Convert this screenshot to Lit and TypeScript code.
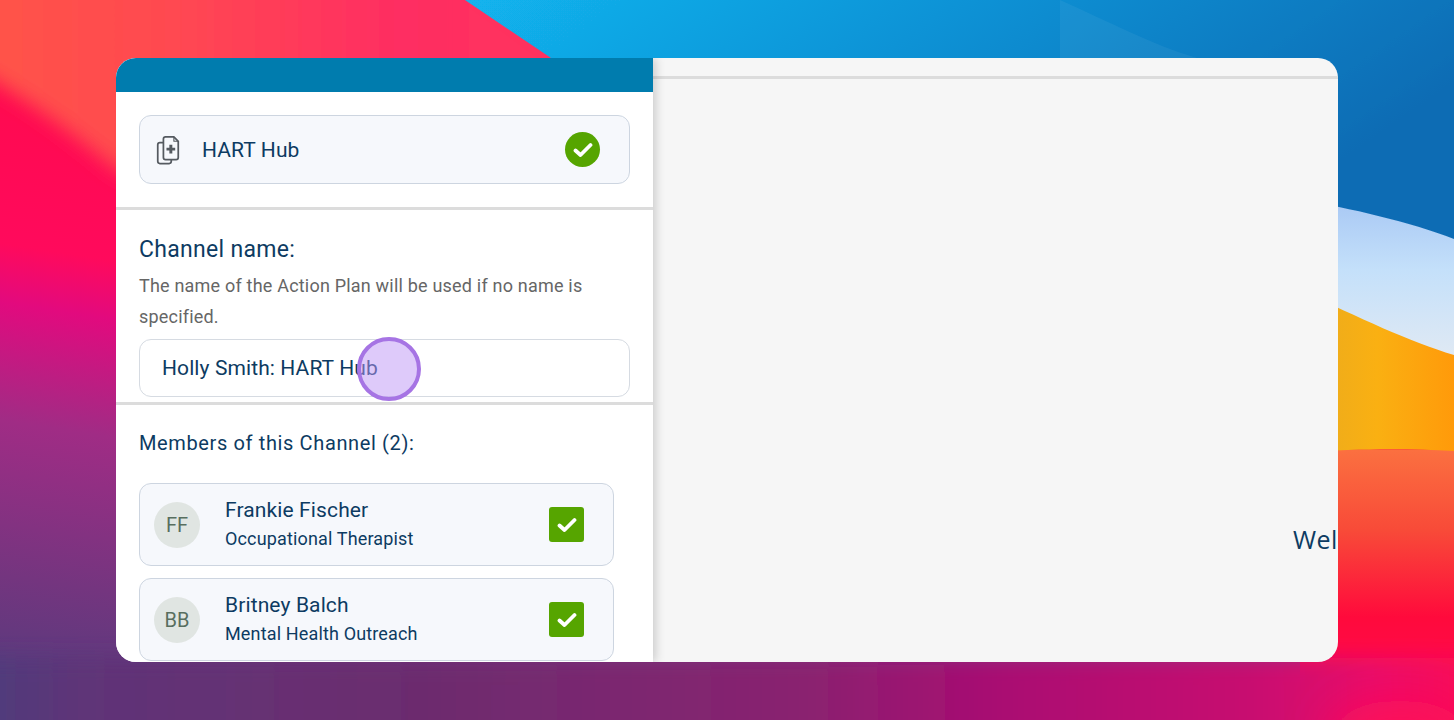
import { LitElement, html, css, svg } from "lit";
import { customElement } from "lit/decorators.js";

const wallpaper = svg`
<svg class="wall" viewBox="0 0 1454 720" width="1454" height="720" preserveAspectRatio="none">
  <defs>
    <linearGradient id="base" gradientUnits="userSpaceOnUse" x1="0" y1="0" x2="-110" y2="720">
      <stop offset="0" stop-color="#ff0a48"/><stop offset=".33" stop-color="#ff0a5c"/>
      <stop offset=".41" stop-color="#e20a7e"/><stop offset=".57" stop-color="#a02c85"/>
      <stop offset=".78" stop-color="#74357f"/><stop offset="1" stop-color="#483e7c"/>
    </linearGradient>
    <linearGradient id="bottom" x1="0" y1="0" x2="1" y2="0">
      <stop offset="0" stop-color="#4a3e7c"/><stop offset=".08" stop-color="#5f3478"/>
      <stop offset=".3" stop-color="#6c2c6e"/><stop offset=".55" stop-color="#8a2270"/>
      <stop offset=".68" stop-color="#aa0a72"/><stop offset=".84" stop-color="#c80a70"/>
      <stop offset=".92" stop-color="#e8086a"/><stop offset="1" stop-color="#ff0a50"/>
    </linearGradient>
    <linearGradient id="coral" x1="0" y1="0" x2="1" y2="0">
      <stop offset="0" stop-color="#ff5548"/><stop offset=".25" stop-color="#ff4a50"/>
      <stop offset=".55" stop-color="#fe2d62"/><stop offset="1" stop-color="#ff3a58"/>
    </linearGradient>
    <linearGradient id="sky" x1="0" y1="0" x2="1" y2=".35">
      <stop offset="0" stop-color="#12b4ee"/><stop offset=".45" stop-color="#0f93d6"/>
      <stop offset="1" stop-color="#0f6cb4"/>
    </linearGradient>
    <linearGradient id="pale" x1="0" y1="0" x2="0" y2="1">
      <stop offset="0" stop-color="#a8c8f4"/><stop offset=".45" stop-color="#c4e0fa"/>
      <stop offset="1" stop-color="#dfe9f4"/>
    </linearGradient>
    <linearGradient id="amber" x1="0" y1="0" x2="1" y2="0">
      <stop offset="0" stop-color="#e8aa20"/><stop offset=".5" stop-color="#fab012"/>
      <stop offset="1" stop-color="#ff9a0a"/>
    </linearGradient>
    <linearGradient id="red" x1="0" y1="0" x2="0" y2="1">
      <stop offset="0" stop-color="#fb7040"/><stop offset=".3" stop-color="#f84a38"/>
      <stop offset=".62" stop-color="#ff0a3c"/><stop offset="1" stop-color="#ff0a58"/>
    </linearGradient>
    <filter id="b2" filterUnits="userSpaceOnUse" x="-200" y="-200" width="1900" height="1200"><feGaussianBlur stdDeviation="10"/></filter>
    <filter id="b1" filterUnits="userSpaceOnUse" x="-200" y="-200" width="1900" height="1200"><feGaussianBlur stdDeviation=".7"/></filter>
    <filter id="b3" filterUnits="userSpaceOnUse" x="-200" y="-200" width="1900" height="1200"><feGaussianBlur stdDeviation="24"/></filter>
  </defs>
  <rect width="1454" height="720" fill="url(#base)"/>
  <path d="M-40 60 C20 95 70 130 116 170 C250 240 500 200 760 120 L760 -40 L-40 -40 Z" fill="url(#coral)" filter="url(#b2)"/>
  <path d="M-20 -20 H470 L700 150 V-20 Z" fill="url(#coral)" opacity=".55" filter="url(#b2)"/>
  <rect x="1300" y="450" width="180" height="270" fill="url(#red)"/>
  <rect x="-40" y="658" width="1540" height="110" fill="url(#bottom)" filter="url(#b2)"/>
  <ellipse cx="1400" cy="740" rx="70" ry="40" fill="#ff0a58" filter="url(#b3)"/>
  <path d="M1300 452 C1360 449 1410 449 1454 451 V300 H1300 Z" fill="url(#amber)"/>
  <path d="M1300 290 C1360 318 1410 342 1454 355 V200 H1300 Z" fill="url(#pale)"/>
  <path d="M462 -2 L551 58 L700 156 L1300 200 C1350 208 1410 222 1454 239 V-2 Z" fill="url(#sky)" filter="url(#b1)"/>
  <path d="M1060 0 C1110 22 1150 44 1197 58 L1197 90 L1060 90 Z" fill="#fff" opacity=".05"/>
</svg>`;

const docIcon = html`<svg class="doc" viewBox="0 0 27.500 34" width="24" height="30" fill="none" stroke="#555a60" stroke-width="2" stroke-linejoin="round">
  <path d="M8 8.500 H4.500 A2.500 2.500 0 0 0 2 11 V30 A2.500 2.500 0 0 0 4.500 32.500 H15 A2.500 2.500 0 0 0 17.500 30 V28"/>
  <path d="M11 2 H20.500 L25.500 7 V25.500 A2.500 2.500 0 0 1 23 28 H11 A2.500 2.500 0 0 1 8.500 25.500 V4.500 A2.500 2.500 0 0 1 11 2 Z"/>
  <path d="M20.500 2 V7 H25.500" stroke-width="1.300"/>
  <path d="M17 11 V21 M12 16 H22" stroke-width="3.400" stroke-linejoin="miter"/>
</svg>`;

const check = html`<svg viewBox="0 0 20 16" width="20" height="16" fill="none" stroke="#fff" stroke-width="3.800" stroke-linecap="round" stroke-linejoin="round"><path d="M2.500 8.500 L7.500 13 L17.500 3"/></svg>`;

const members = [
  { i: "FF", name: "Frankie Fischer", role: "Occupational Therapist" },
  { i: "BB", name: "Britney Balch", role: "Mental Health Outreach" },
];

@customElement("app-root")
export class AppRoot extends LitElement {
  static styles = css`
    :host { display: block; position: relative; width: 1454px; height: 720px; overflow: hidden; font-family: Roboto, "Liberation Sans", sans-serif; color: #0d3b62; }
    .wall { position: absolute; inset: 0; display: block; }
    .stage { position: relative; box-sizing: border-box; height: 720px; padding: 58px 116px; }
    .window { display: flex; height: 604px; border-radius: 20px; overflow: hidden; background: #f6f6f6; }
    .left { position: relative; z-index: 1; flex: 0 0 537px; background: #fff; box-shadow: 2px 0 10px rgba(0,0,0,.2); overflow: hidden; }
    .bar { height: 34px; background: #007cae; }
    .sec1 { box-sizing: border-box; height: 118px; padding: 23px 23px 0; border-bottom: 3px solid #dcdcdc; }
    .hub { box-sizing: border-box; height: 69px; display: flex; align-items: center; background: #f6f8fc; border: 1px solid #cdd5e0; border-radius: 12px; padding: 0 29px 0 16px; }
    .hub .doc { margin-right: 22px; }
    .hub .t { flex: 1; font-size: 21px; letter-spacing: .1px; }
    .circle { width: 35px; height: 35px; border-radius: 50%; background: #56a500; display: flex; align-items: center; justify-content: center; }
    .sec2 { box-sizing: border-box; height: 195px; padding: 25px 23px 0; border-bottom: 3px solid #dcdcdc; }
    h2 { margin: 0; font-weight: 400; font-size: 23px; line-height: 30px; letter-spacing: .3px; }
    p { margin: 5px 0 7px; font-size: 18px; line-height: 31px; color: #666; letter-spacing: .2px; }
    .input { box-sizing: border-box; height: 58px; display: flex; align-items: center; border: 1px solid #d6dbe2; border-radius: 12px; padding: 0 22px; font-size: 21px; letter-spacing: .1px; background: #fff; }
    .sec3 { padding: 23px 39px 0 23px; }
    h3 { margin: 0 0 25px; font-weight: 400; font-size: 20px; line-height: 30px; letter-spacing: .63px; }
    .m { box-sizing: border-box; height: 83px; margin-bottom: 12px; display: flex; align-items: center; background: #f6f8fc; border: 1px solid #cdd5e0; border-radius: 12px; padding: 0 29px 0 14px; }
    .av { flex: 0 0 46px; height: 46px; border-radius: 50%; background: #e0e5e2; color: #586e5f; display: flex; align-items: center; justify-content: center; font-size: 20px; margin-right: 25px; }
    .who { flex: 1; }
    .n { font-size: 21px; line-height: 26px; letter-spacing: .12px; }
    .r { font-size: 18px; line-height: 26px; margin-top: 3px; letter-spacing: .15px; }
    .box { width: 35px; height: 35px; border-radius: 3px; background: #56a500; display: flex; align-items: center; justify-content: center; }
    .right { flex: 1; min-width: 0; overflow: hidden; }
    .line { height: 18px; border-bottom: 3px solid #dcdcdc; }
    .wel { padding: 442px 0 0 640px; font-family: "Open Sans", sans-serif; font-size: 25px; line-height: 36px; letter-spacing: .5px; white-space: nowrap; color: #0d3b62; }
    .cursor { position: absolute; z-index: 2; left: 357px; top: 337px; box-sizing: border-box; width: 64px; height: 64px; border-radius: 50%; background: rgba(190,150,245,.5); border: 4px solid #a674e4; }
  `;

  render() {
    return html`${wallpaper}
      <div class="stage">
        <div class="window">
          <div class="left">
            <div class="bar"></div>
            <div class="sec1">
              <div class="hub">${docIcon}<span class="t">HART Hub</span><span class="circle">${check}</span></div>
            </div>
            <div class="sec2">
              <h2>Channel name:</h2>
              <p>The name of the Action Plan will be used if no name is specified.</p>
              <div class="input">Holly Smith: HART Hub</div>
            </div>
            <div class="sec3">
              <h3>Members of this Channel (2):</h3>
              ${members.map(m => html`<div class="m">
                <div class="av">${m.i}</div>
                <div class="who"><div class="n">${m.name}</div><div class="r">${m.role}</div></div>
                <div class="box">${check}</div>
              </div>`)}
            </div>
          </div>
          <div class="right">
            <div class="line"></div>
            <div class="wel">Welcome to HART Hub</div>
          </div>
        </div>
      </div>
      <div class="cursor"></div>`;
  }
}
